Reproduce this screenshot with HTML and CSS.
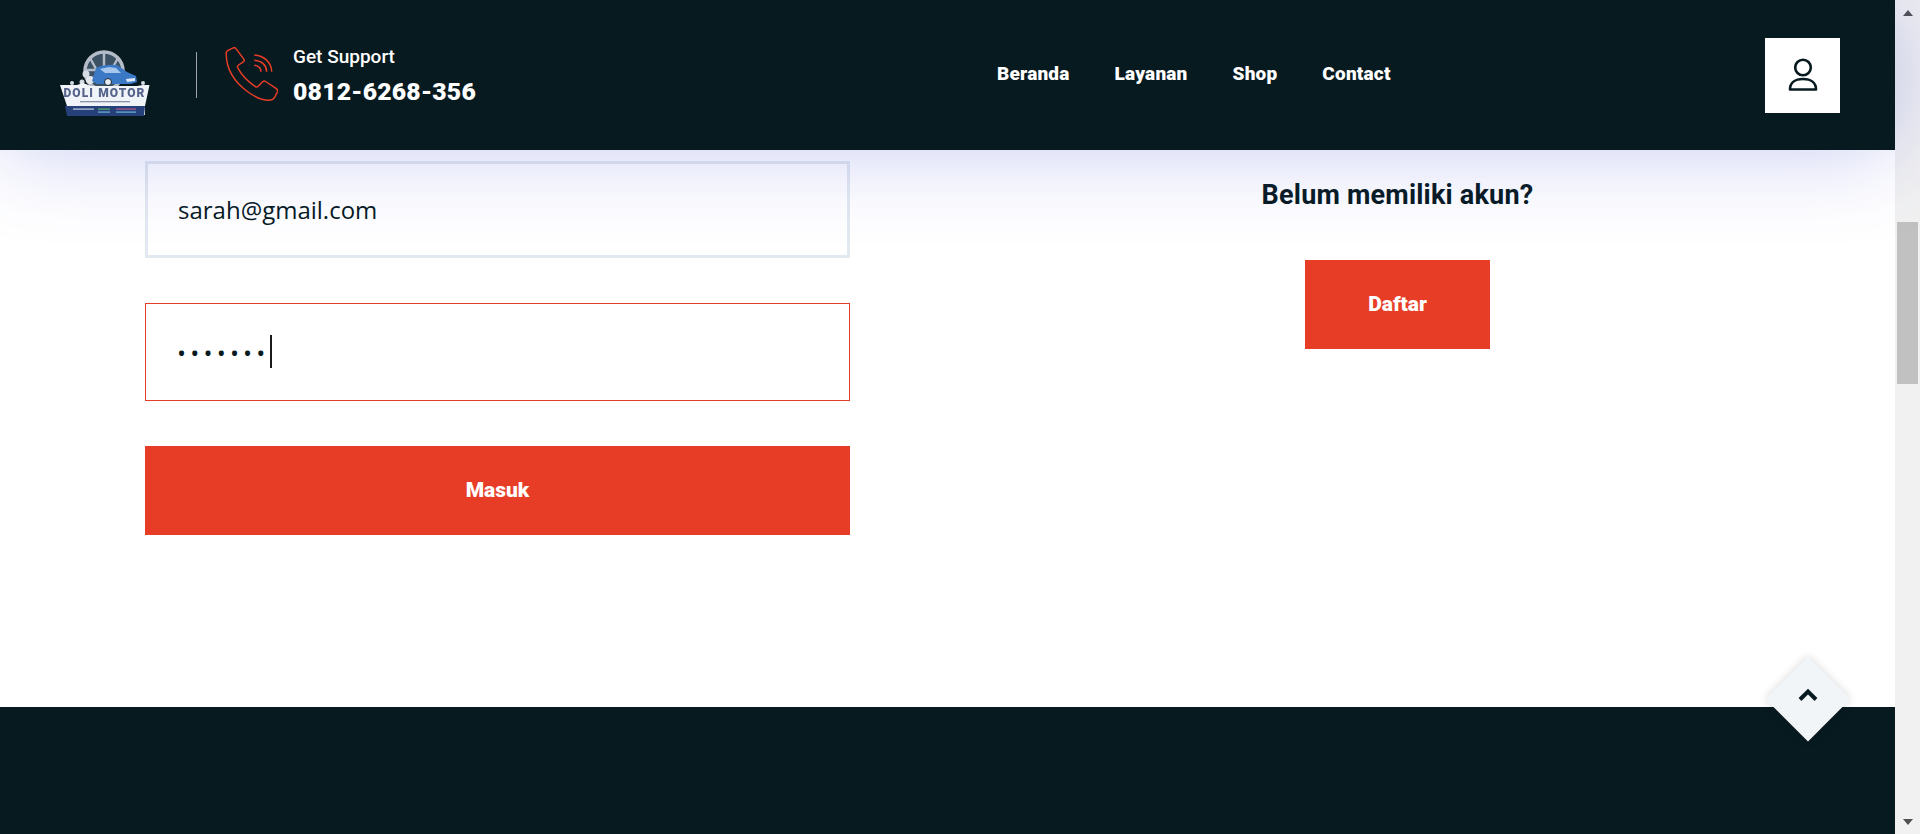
FILE: index.html
```html
<!DOCTYPE html>
<html lang="id">
<head>
<meta charset="utf-8">
<title>Doli Motor - Masuk</title>
<link rel="stylesheet" href="styles.css">
</head>
<body>
<div class="viewport">
  <div class="page">
    <header class="header">
      <a class="logo" href="#">
        <svg width="91" height="67" viewBox="0 0 91 67">
          <circle cx="45" cy="21" r="19" fill="#3c5264" stroke="#b4bcc9" stroke-width="3.5"/>
          <path d="M45 2V30M31 8L41 26M59 8L49 26M26 20H38M64 20H52" stroke="#b4bcc9" stroke-width="2.4"/>
          <circle cx="27" cy="24" r="3.5" fill="#d6dce4"/>
          <circle cx="31" cy="30" r="4" fill="#e3e7ec"/>
          <circle cx="37" cy="27" r="2.5" fill="#c6ced9"/>
          <path d="M33 31L37 18Q46 14 58 15L68 22L77 26L78 32L72 34H38Z" fill="#3b78c6"/>
          <path d="M41 19L50 17L57 18L62 23L46 23Z" fill="#a6c6ec"/>
          <path d="M67 29L76 28L76 31L68 32Z" fill="#dfe8f4"/>
          <circle cx="49" cy="32" r="3.5" fill="#e8edf4" stroke="#17222e"/>
          <circle cx="13" cy="33" r="2" fill="#d6dce4"/>
          <circle cx="23" cy="32" r="2.5" fill="#d6dce4"/>
          <circle cx="84" cy="33" r="2" fill="#d6dce4"/>
          <path d="M1 35H18L24 33L32 36H78L84 35H90.5L86 56V65H8V56Z" fill="#f0f3f8"/>
          <path d="M6 56H86L85 66H8Z" fill="#26407a"/>
          <text x="45.5" y="47" text-anchor="middle" class="logo-text">DOLI MOTOR</text>
          <rect x="21" y="51" width="50" height="1.3" fill="#8791a8"/>
          <rect x="14" y="58.5" width="21" height="1.2" fill="#c3cde2"/>
          <rect x="39" y="58.5" width="12" height="1.2" fill="#58b368"/>
          <rect x="57" y="58.5" width="20" height="1.2" fill="#b65a8c"/>
          <rect x="39" y="61.5" width="12" height="1.2" fill="#6cb4d8"/>
          <rect x="57" y="61.5" width="20" height="1.2" fill="#6cb4d8"/>
        </svg>
      </a>
      <span class="divider"></span>
      <svg class="phone-icon" width="53" height="54" viewBox="0 0 53 54" fill="none">
        <path d="M1.2 6.5C1 5 2 4 3 3.4L8.3.8C9.5.5 10.5.8 11 1.6L19 12.4C19.6 13.3 19.3 14 18.6 14.6L13.6 18C12.3 18.9 12.2 20 13 21.4C17 28.5 23.5 35 30.3 39.6C31.5 40.4 32.3 40.2 33.2 39.2L37.6 34.8C38.6 33.8 39.6 33.8 40.6 34.5L51 41.4C52.4 42.4 52.9 43.6 52.4 45L49.4 50.6C48.2 52.6 46.6 53.2 44 53.2C38 53.2 30 50 23 45C12 37 1.2 24 1.2 6.5Z" stroke-linejoin="round"/>
        <path d="M29.3 8C39 8.5 46.5 15.5 46.7 24.7M29.3 13.3C36.5 14 41.4 18 41.7 24.7M29.3 18.3C33.5 18.8 35.8 21 36 24.7"/>
      </svg>
      <div class="support">
        <span class="support-label">Get Support</span>
        <a class="support-number" href="#">0812-6268-356</a>
      </div>
      <nav class="nav">
        <a href="#">Beranda</a>
        <a href="#">Layanan</a>
        <a href="#">Shop</a>
        <a href="#">Contact</a>
      </nav>
      <a class="user-btn" href="#" aria-label="Akun">
        <svg width="32" height="34" viewBox="0 0 32 34" fill="none">
          <circle cx="16" cy="9.5" r="7.8"/>
          <path d="M3 31.5C3 25 8 21 16 21S29 25 29 31.5Z" stroke-linejoin="round"/>
        </svg>
      </a>
    </header>

    <main class="main">
      <form class="login">
        <input class="field field-email" type="email" value="sarah@gmail.com">
        <div class="password-wrap">
          <input class="field field-password" type="password" value="1234567">
          <span class="caret"></span>
        </div>
        <button class="btn btn-wide" type="button">Masuk</button>
      </form>
      <section class="register">
        <h2>Belum memiliki akun?</h2>
        <a class="btn btn-register" href="#">Daftar</a>
      </section>
    </main>

    <footer class="footer"></footer>

    <a class="to-top" href="#" aria-label="Ke atas">
      <svg width="22" height="14" viewBox="0 0 22 14" fill="none"><path d="M3 11.5L11 3.5L19 11.5"/></svg>
    </a>
  </div>

  <div class="scrollbar">
    <span class="arrow arrow-up"></span>
    <div class="track"><span class="thumb"></span></div>
    <span class="arrow arrow-down"></span>
  </div>
</div>
</body>
</html>
```

FILE: styles.css
```css
* { box-sizing: border-box; }
html, body { margin: 0; height: 100%; overflow: hidden; }
body { font-family: "Roboto", "Liberation Sans", sans-serif; background: #fff; color: #071a1f; }
a { text-decoration: none; color: inherit; }

.viewport { display: flex; height: 834px; }
.page { position: relative; flex: 1; min-width: 0; display: flex; flex-direction: column; }

/* Header */
.header {
  position: relative;
  z-index: 2;
  flex: 0 0 150px;
  display: flex;
  align-items: center;
  padding: 0 55px 0 59px;
  background: #071a1f;
  color: #fff;
  box-shadow: 0 0 90px rgba(70, 80, 210, .3);
}
.logo { display: block; width: 91px; height: 67px; margin-top: 16px; filter: blur(.5px); }
.logo-text { font: 900 12px "Roboto", sans-serif; fill: #56648c; letter-spacing: 1.1px; }
.divider { width: 1px; height: 46px; margin: 0 28px 0 46px; background: #9da4a6; }
.phone-icon { stroke: #e73d27; stroke-width: 1.5; margin-top: -2px; }
.support { display: flex; flex-direction: column; margin: 5px 0 0 15px; }
.support-label { font-size: 19px; font-weight: 500; line-height: 24px; }
.support-number { margin-top: 5px; font-size: 24.8px; font-weight: 900; line-height: 36px; letter-spacing: .2px; }
.nav { display: flex; gap: 45px; margin-left: 521px; font-size: 19px; font-weight: 900; letter-spacing: .2px; margin-top: -4px; }
.user-btn {
  margin-left: auto;
  margin-top: 1px;
  width: 75px;
  height: 75px;
  display: flex;
  align-items: center;
  justify-content: center;
  background: #fff;
}
.user-btn svg { stroke: #071a1f; stroke-width: 2.6; margin-top: -2px; }

/* Main */
.main {
  flex: 1;
  display: grid;
  grid-template-columns: 705px 1fr;
  column-gap: 90px;
  padding: 11px 40px 0 145px;
}
.login { display: flex; flex-direction: column; }
.field {
  display: block;
  width: 100%;
  padding: 0 30px;
  background: #fff;
  color: #071a1f;
  font: 400 24px "Open Sans", sans-serif;
  outline: none;
  border-radius: 0;
}
.field-email { height: 97px; border: 3px solid #e3e9f0; }
.password-wrap { position: relative; margin-top: 45px; }
.field-password { height: 98px; border: 1px solid #e73d27; padding-left: 31px; letter-spacing: 4.2px; }
.caret { position: absolute; left: 125px; top: 32px; width: 2px; height: 33px; background: #1a1a1a; }
.btn {
  display: flex;
  align-items: center;
  justify-content: center;
  border: 0;
  padding: 0 0 2px;
  background: #e73d27;
  color: #fff;
  font: 900 21px "Roboto", sans-serif;
}
.btn-wide { height: 89px; margin-top: 45px; }
.register { display: flex; flex-direction: column; align-items: center; }
.register h2 { margin: 17px 0 0; font-size: 27px; line-height: 34px; font-weight: 700; letter-spacing: .2px; color: #071a1f; }
.btn-register { width: 185px; height: 89px; margin-top: 48px; }

/* Footer */
.footer { flex: 0 0 127px; background: #071a1f; }

/* Back to top */
.to-top {
  position: absolute;
  left: 1778px;
  top: 669px;
  width: 60px;
  height: 60px;
  display: flex;
  align-items: center;
  justify-content: center;
  background: #f2f5f7;
  transform: rotate(45deg);
  box-shadow: 0 0 10px rgba(0, 0, 0, .15);
}
.to-top svg { transform: rotate(-45deg) translateY(-4px); stroke: #071a1f; stroke-width: 4; }

/* Scrollbar */
.scrollbar {
  flex: 0 0 25px;
  display: flex;
  flex-direction: column;
  align-items: center;
  background: #f1f1f1;
}
.arrow { flex: 0 0 25px; display: flex; align-items: center; justify-content: center; }
.arrow::before { content: ""; border-left: 5.5px solid transparent; border-right: 5.5px solid transparent; }
.arrow-up::before { border-bottom: 6px solid #505050; }
.arrow-down::before { border-top: 6px solid #505050; }
.track { flex: 1; width: 100%; padding-top: 197px; }
.thumb { display: block; height: 162px; margin: 0 2px; background: #c1c1c1; }
```
